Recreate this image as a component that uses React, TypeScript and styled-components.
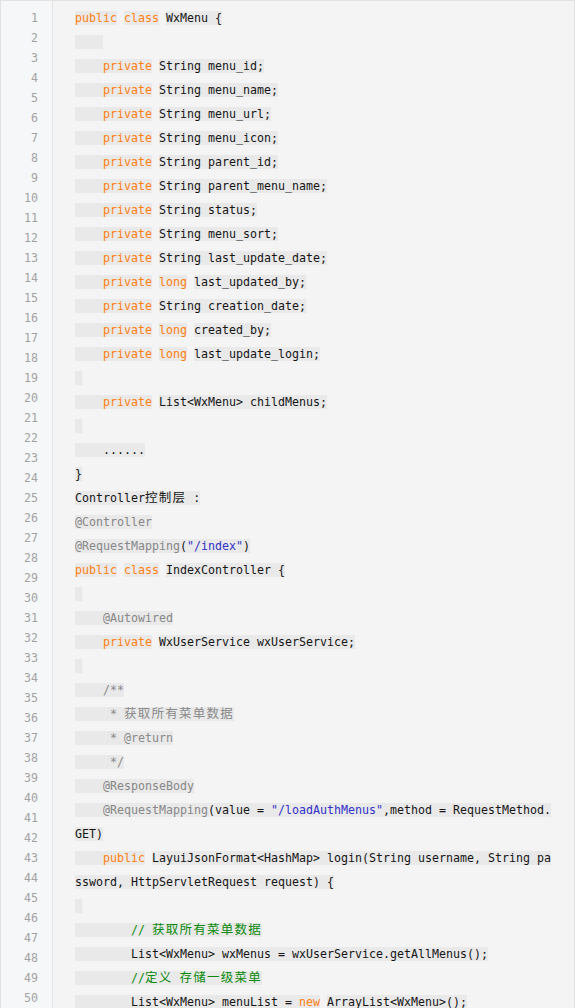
import React from "react";
import styled, { createGlobalStyle } from "styled-components";

type Kind = "t" | "k" | "a" | "s" | "c" | "g";
type Tok = [string, Kind];
type Group = Tok[];
type Line = Group[];

const MONO = `"DejaVu Sans Mono", "Liberation Mono", "Noto Sans CJK SC", monospace`;

const Global = createGlobalStyle`
  html, body {
    margin: 0;
    padding: 0;
    overflow: hidden;
    background: #ffffff;
  }
`;

const Frame = styled.div`
  display: flex;
  box-sizing: border-box;
  height: 1008px;
  overflow: hidden;
  border: 1px solid #e2e2e2;
  border-bottom: none;
  background: #f4f4f4;
`;

const Gutter = styled.ol`
  flex: none;
  box-sizing: border-box;
  width: 52px;
  margin: 0;
  padding: 7px 14px 0 0;
  list-style: none;
  background: #f6f7f9;
  border-right: 1px solid #e3e3e3;
  text-align: right;
  font-family: ${MONO};
  font-size: 11.63px;
  line-height: 20px;
  color: #a3a3a3;
`;

const Num = styled.li`
  height: 20px;
`;

const Code = styled.div`
  flex: 1;
  min-width: 0;
  padding: 5px 0 0 22px;
`;

const Listing = styled.div`
  width: calc(68ch + 2px);
  font-family: ${MONO};
  font-size: 11.63px;
  line-height: 24px;
  white-space: pre-wrap;
  word-break: break-all;
  color: #151515;
`;

const CodeLine = styled.div`
  min-height: 24px;
`;

const Hl = styled.span`
  background: #e9e9e9;
`;

const colors: Record<Kind, string> = {
  t: "#151515",
  k: "#ff7f0f",
  a: "#878787",
  s: "#3232c8",
  c: "#8a8a8a",
  g: "#0a8a0a",
};

const Tk = styled.span<{ $kind: Kind }>`
  color: ${(p) => colors[p.$kind]};
`;

const Wide = styled.span`
  font-family: "Noto Sans CJK SC", sans-serif;
  font-size: 12.5px;
  letter-spacing: 1.25px;
  line-height: 1;
`;

const CJK = /([\u3400-\u9fff\uff00-\uffef]+)/;

function renderText(text: string) {
  return text.split(CJK).map((part, i) =>
    i % 2 === 1 ? <Wide key={i}>{part}</Wide> : part
  );
}

const priv = (rest: string): Line => [[["    private", "k"]], [[rest, "t"]]];
const privLong = (rest: string): Line => [
  [["    private", "k"]],
  [["long", "k"]],
  [[rest, "t"]],
];
const blank: Line = [[[" ", "t"]]];

const lines: Line[] = [
  [[["public", "k"]], [["class", "k"]], [["WxMenu {", "t"]]],
  [[["    ", "t"]]],
  priv("String menu_id;"),
  priv("String menu_name;"),
  priv("String menu_url;"),
  priv("String menu_icon;"),
  priv("String parent_id;"),
  priv("String parent_menu_name;"),
  priv("String status;"),
  priv("String menu_sort;"),
  priv("String last_update_date;"),
  privLong("last_updated_by;"),
  priv("String creation_date;"),
  privLong("created_by;"),
  privLong("last_update_login;"),
  blank,
  priv("List<WxMenu> childMenus;"),
  blank,
  [[["    ......", "t"]]],
  [[["}", "t"]]],
  [[["Controller控制层 :", "t"]]],
  [[["@Controller", "a"]]],
  [[["@RequestMapping", "a"], ["(", "t"], ['"/index"', "s"], [")", "t"]]],
  [[["public", "k"]], [["class", "k"]], [["IndexController {", "t"]]],
  blank,
  [[["    @Autowired", "a"]]],
  priv("WxUserService wxUserService;"),
  blank,
  [[["    /**", "c"]]],
  [[["     * 获取所有菜单数据", "c"]]],
  [[["     * @return", "c"]]],
  [[["     */", "c"]]],
  [[["    @ResponseBody", "a"]]],
  [
    [
      ["    @RequestMapping", "a"],
      ["(value = ", "t"],
      ['"/loadAuthMenus"', "s"],
      [",method = RequestMethod.GET)", "t"],
    ],
  ],
  [
    [["    public", "k"]],
    [
      [
        "LayuiJsonFormat<HashMap> login(String username, String password, HttpServletRequest request) {",
        "t",
      ],
    ],
  ],
  blank,
  [[["        // 获取所有菜单数据", "g"]]],
  [[["        List<WxMenu> wxMenus = wxUserService.getAllMenus();", "t"]]],
  [[["        //定义 存储一级菜单", "g"]]],
  [
    [["        List<WxMenu> menuList = ", "t"], ["new", "k"]],
    [["ArrayList<WxMenu>();", "t"]],
  ],
];

const numbers = Array.from({ length: 52 }, (_, i) => i + 1);

export default function App() {
  return (
    <>
      <Global />
      <Frame>
        <Gutter>
          {numbers.map((n) => (
            <Num key={n}>{n}</Num>
          ))}
        </Gutter>
        <Code>
          <Listing>
            {lines.map((line, li) => (
              <CodeLine key={li}>
                {line.map((group, gi) => (
                  <React.Fragment key={gi}>
                    {gi > 0 ? " " : null}
                    <Hl>
                      {group.map(([text, kind], ti) => (
                        <Tk key={ti} $kind={kind}>
                          {renderText(text)}
                        </Tk>
                      ))}
                    </Hl>
                  </React.Fragment>
                ))}
              </CodeLine>
            ))}
          </Listing>
        </Code>
      </Frame>
    </>
  );
}
